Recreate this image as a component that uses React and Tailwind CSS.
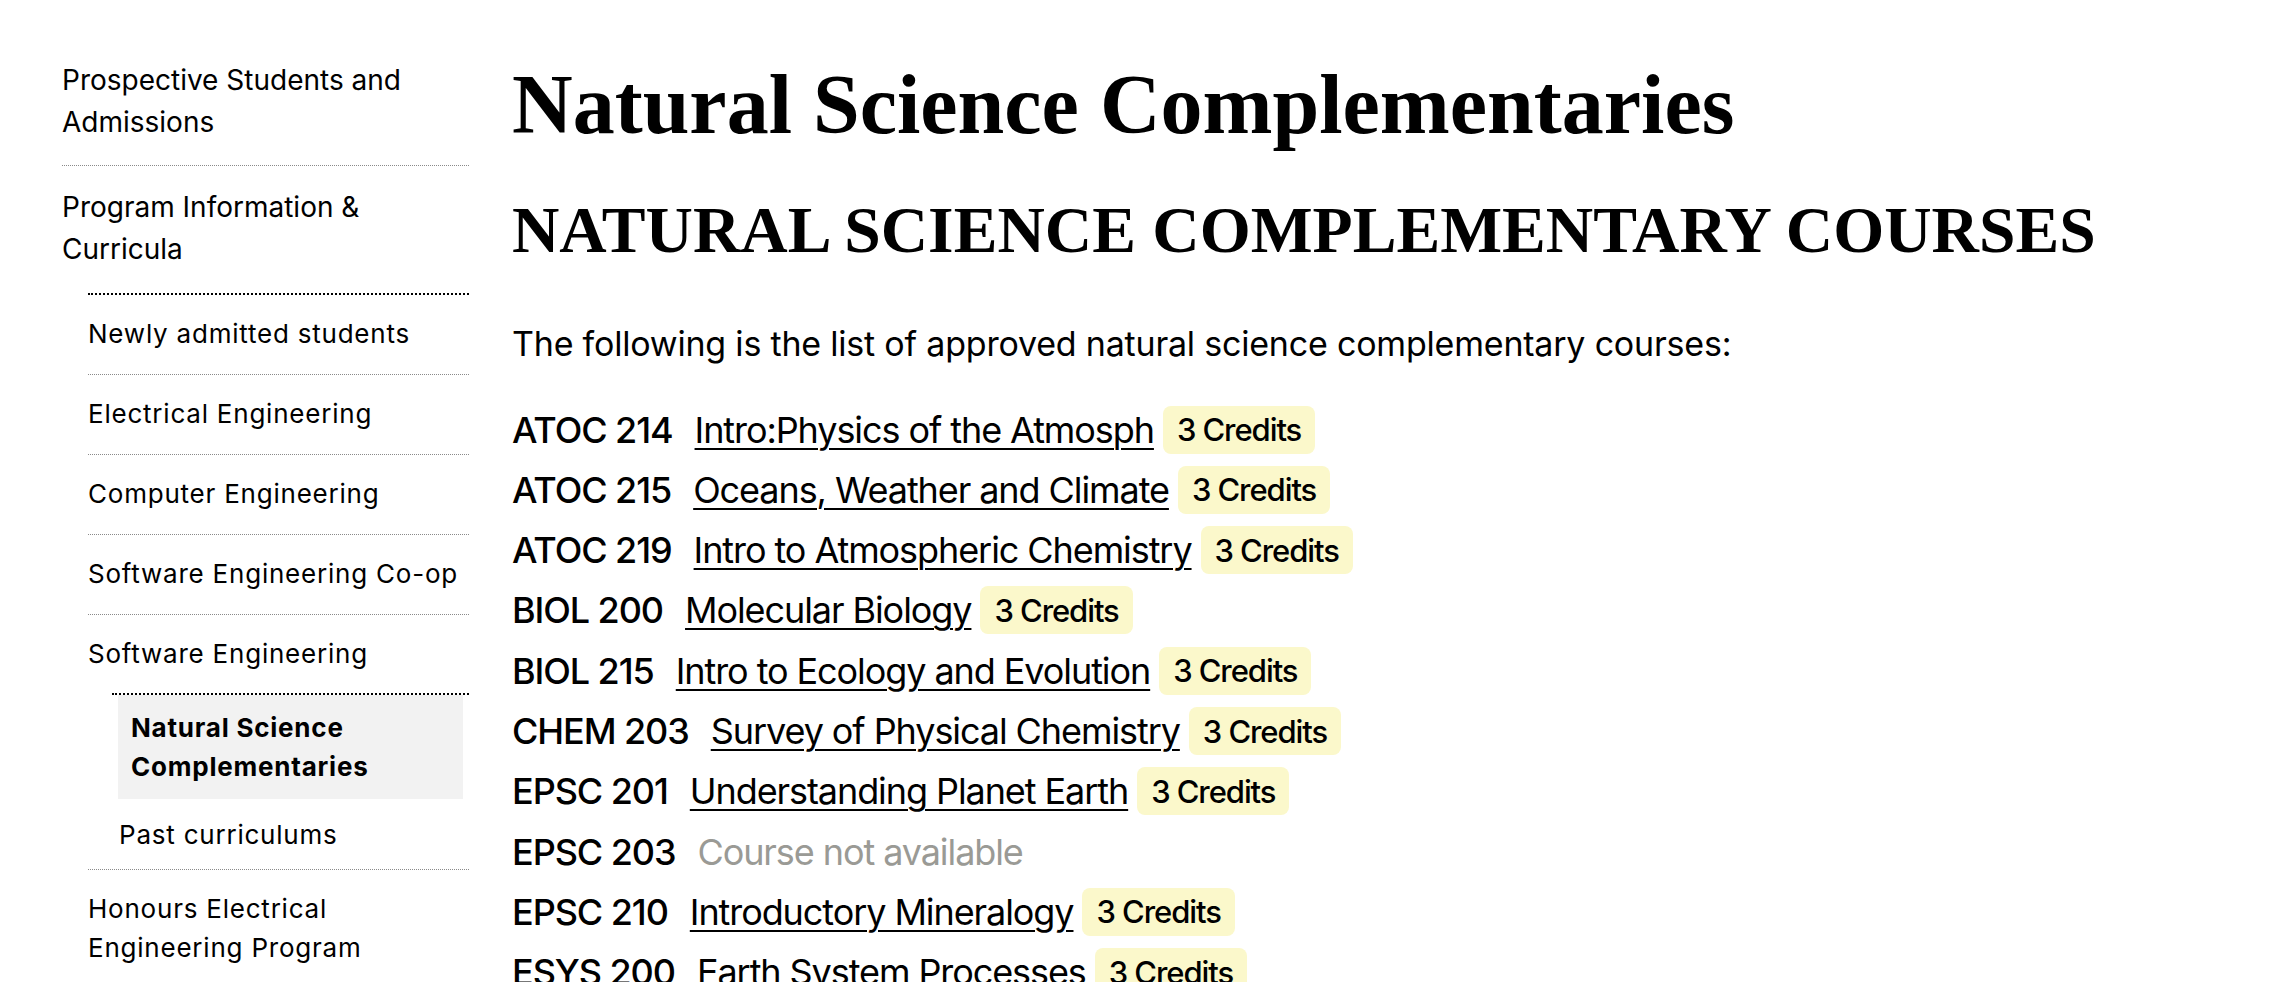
import React from "react";

const sans = { fontFamily: "Inter, 'Noto Sans', sans-serif" };
const serif = { fontFamily: "'Liberation Serif', 'Times New Roman', serif" };

const courses = [
  { code: "ATOC 214", title: "Intro:Physics of the Atmosph", credits: 3 },
  { code: "ATOC 215", title: "Oceans, Weather and Climate", credits: 3 },
  { code: "ATOC 219", title: "Intro to Atmospheric Chemistry", credits: 3 },
  { code: "BIOL 200", title: "Molecular Biology", credits: 3 },
  { code: "BIOL 215", title: "Intro to Ecology and Evolution", credits: 3 },
  { code: "CHEM 203", title: "Survey of Physical Chemistry", credits: 3 },
  { code: "EPSC 201", title: "Understanding Planet Earth", credits: 3 },
  { code: "EPSC 203", title: null },
  { code: "EPSC 210", title: "Introductory Mineralogy", credits: 3 },
  { code: "ESYS 200", title: "Earth System Processes", credits: 3 },
];

// second level links in the side nav
const subItem =
  "border-b border-dotted border-[#8a8a8a] pt-[19px] pb-[21px] text-[26px] leading-[39px] tracking-[0.03em]";

const Sidebar = () => (
  <aside className="w-[407px] shrink-0 pt-[39px] text-black" style={sans}>
    <ul>
      <li className="border-b border-dotted border-[#8a8a8a] pt-[20px] pb-[22px] text-[28px] leading-[42px]">
        <a href="#">Prospective Students and Admissions</a>
      </li>
      <li className="pt-[20px] text-[28px] leading-[42px]">
        <a href="#">Program Information &amp; Curricula</a>
        <ul className="ml-[26px] mt-[23px] border-t-2 border-dotted border-black">
          <li className={subItem}>Newly admitted students</li>
          <li className={subItem}>Electrical Engineering</li>
          <li className={subItem}>Computer Engineering</li>
          <li className={subItem}>Software Engineering Co-op</li>
          <li className="border-b border-dotted border-[#8a8a8a] pt-[19px] text-[26px] leading-[39px] tracking-[0.03em]">
            <a href="#">Software Engineering</a>
            <ul className="ml-[24px] mt-[20px] border-t-2 border-dotted border-black">
              <li className="mx-[6px] bg-[#f2f2f2] px-[13px] py-[13px] font-bold">
                Natural Science Complementaries
              </li>
              <li className="pl-[7px] pt-[16px] pb-[15px]">Past curriculums</li>
            </ul>
          </li>
          <li className={subItem}>Honours Electrical Engineering Program</li>
        </ul>
      </li>
    </ul>
  </aside>
);

const CourseRow = ({ c }) => (
  <li className="flex items-center h-[48px] text-[36px] leading-none tracking-[-0.03em]">
    <span className="font-medium mr-[22px]">{c.code}</span>
    {c.title ? (
      <>
        <a
          href="#"
          className="underline decoration-2 underline-offset-[5px] mr-[9px]"
        >
          {c.title}
        </a>
        <span className="rounded-[8px] bg-[#fbf8cb] px-[14px] h-[48px] flex items-center text-[31px] font-medium">
          {c.credits} Credits
        </span>
      </>
    ) : (
      <span className="text-[#9a9a95]">Course not available</span>
    )}
  </li>
);

export default function App() {
  return (
    <div className="flex items-start bg-white pl-[62px] min-h-screen overflow-hidden">
      <Sidebar />
      <main className="ml-[43px] pt-[63px] text-black">
        <h1 className="text-[84px] leading-none font-bold" style={serif}>
          Natural Science Complementaries
        </h1>
        <h2 className="mt-[51px] text-[65.6px] leading-none font-bold" style={serif}>
          NATURAL SCIENCE COMPLEMENTARY COURSES
        </h2>
        <div style={sans}>
          <p className="mt-[59px] text-[34px] leading-[41px] tracking-[-0.006em]">
            The following is the list of approved natural science complementary courses:
          </p>
          <ul className="mt-[42px] flex flex-col gap-[12.3px]">
            {courses.map((c) => (
              <CourseRow key={c.code} c={c} />
            ))}
          </ul>
        </div>
      </main>
    </div>
  );
}
